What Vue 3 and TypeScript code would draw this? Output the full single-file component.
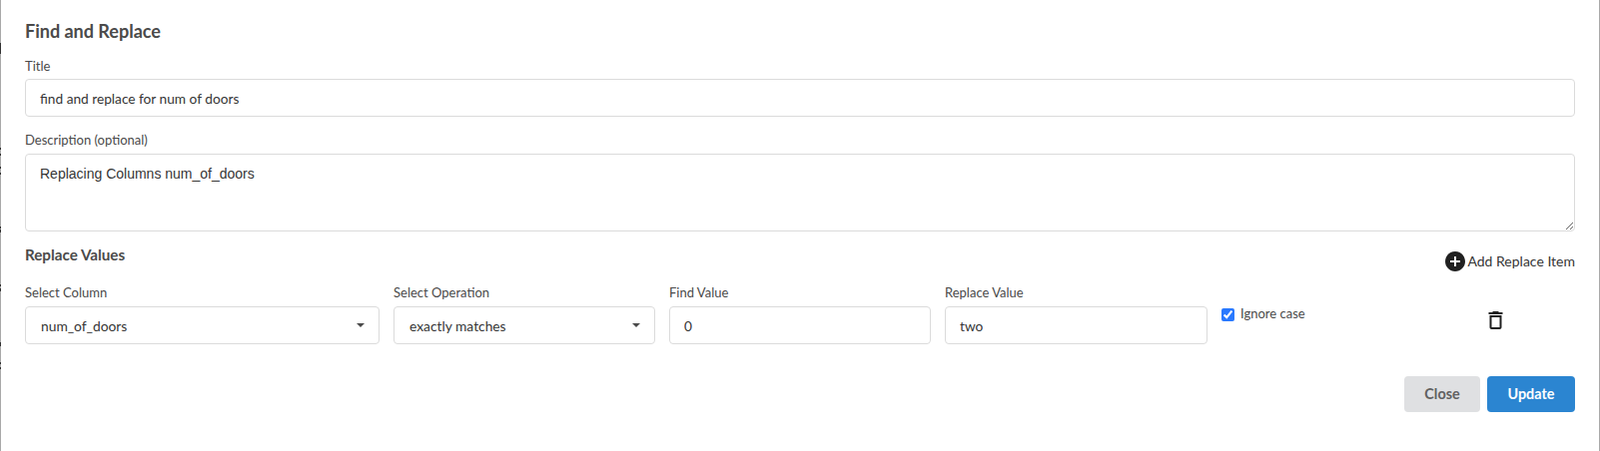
<script setup lang="ts">
interface Tick { top: number; height: number }
const ticks: Tick[] = [
  { top: 43, height: 11 },
  { top: 148, height: 2 },
  { top: 154, height: 2 },
  { top: 167, height: 2 },
  { top: 173, height: 2 },
  { top: 227, height: 2 },
  { top: 230, height: 3 },
  { top: 285, height: 2 },
  { top: 289, height: 3 },
  { top: 343, height: 4 },
  { top: 363, height: 2 },
  { top: 368, height: 2 },
]
</script>

<template>
  <div class="page">
    <div class="rail left">
      <span v-for="t in ticks" :key="t.top" class="tick" :style="{ top: t.top + 'px', height: t.height + 'px' }"></span>
    </div>
    <div class="rail right"></div>
    <div class="modal">
      <h2 class="title">Find and Replace</h2>
      <div class="field first">
        <label>Title</label>
        <input class="input" value="find and replace for num of doors" />
      </div>
      <div class="field second">
        <label>Description (optional)</label>
        <textarea class="input area">Replacing Columns num_of_doors</textarea>
      </div>
      <div class="head">
        <h3>Replace Values</h3>
        <button class="add" type="button">
          <svg width="20" height="20" viewBox="2 2 20 20">
            <path fill="#212121" d="M12 2C6.48 2 2 6.48 2 12s4.48 10 10 10 10-4.48 10-10S17.52 2 12 2zm5 11h-4v4h-2v-4H7v-2h4V7h2v4h4v2z" />
          </svg>
          <span>Add Replace Item</span>
        </button>
      </div>
      <div class="row">
        <div class="col c1">
          <label>Select Column</label>
          <div class="input select">num_of_doors<i class="caret"></i></div>
        </div>
        <div class="col c2">
          <label>Select Operation</label>
          <div class="input select">exactly matches<i class="caret"></i></div>
        </div>
        <div class="col c3">
          <label>Find Value</label>
          <input class="input" value="0" />
        </div>
        <div class="col c4">
          <label>Replace Value</label>
          <input class="input" value="two" />
        </div>
        <label class="check">
          <input type="checkbox" checked />
          <span>Ignore case</span>
        </label>
        <svg class="trash" width="15" height="18" viewBox="5 3 14 18">
          <path fill="#212121" d="M6 19c0 1.1.9 2 2 2h8c1.1 0 2-.9 2-2V7H6v12zM8 9h8v10H8V9zm7.5-5l-1-1h-5l-1 1H5v2h14V4h-3.5z" />
        </svg>
      </div>
      <div class="actions">
        <button class="btn close" type="button">Close</button>
        <button class="btn update" type="button">Update</button>
      </div>
    </div>
  </div>
</template>

<style>
html, body { margin: 0; background: #fff; }
</style>

<style scoped>
.page {
  position: relative;
  width: 1602px;
  height: 452px;
  overflow: hidden;
  background: #fff;
  box-sizing: border-box;
  font-family: Lato, sans-serif;
  color: #4a4a4a;
}
.rail { position: absolute; top: 0; bottom: 0; width: 1px; background: #a9a9a9; }
.rail.left { left: 0; }
.rail.right { right: 0; }
.tick { position: absolute; left: 0; width: 1px; background: #333; }
.modal { padding: 20px 25px 0 25px; }
.title { margin: 0; font-size: 18px; line-height: 22px; font-weight: 700; color: #4a4a4a; }
label { display: block; font-size: 13px; line-height: 16px; color: #4a4a4a; }
.field.first { margin-top: 16px; }
.field.second { margin-top: 15px; }
.field label { margin-bottom: 5px; }
.field.second label { margin-bottom: 6px; }
.input {
  display: block;
  width: 100%;
  height: 38px;
  box-sizing: border-box;
  border: 1px solid #dbdbdb;
  border-radius: 4px;
  padding: 1px 14px 0;
  font-family: Lato, sans-serif;
  font-size: 13.7px;
  color: #363636;
  background: #fff;
  outline: none;
}
.area {
  height: 78px;
  padding-top: 11px;
  font-family: "Liberation Sans", Arial, sans-serif;
  font-size: 14px;
  resize: vertical;
}
.head { display: flex; justify-content: space-between; margin-top: 15px; height: 38px; }
.head h3 { margin: 0; font-size: 15.2px; line-height: 16px; font-weight: 700; color: #4a4a4a; }
.add {
  display: flex;
  align-items: center;
  gap: 2px;
  height: 20px;
  margin-top: 5px;
  padding: 0;
  border: 0;
  background: none;
  font-family: Lato, sans-serif;
  font-size: 14px;
  color: #363636;
}
.add span { margin-bottom: 2px; }
.row { display: flex; align-items: flex-start; }
.col label { margin-bottom: 6px; }
.c1 { width: 355px; margin-right: 14px; }
.c2 { width: 262px; margin-right: 14px; }
.c3 { width: 262px; margin-right: 14px; }
.c4 { width: 263px; margin-right: 14px; }
.select { display: flex; align-items: center; position: relative; padding: 0 14px 0 15px; font-size: 13.8px; }
.caret {
  position: absolute;
  right: 14px;
  top: 16px;
  border: 4px solid transparent;
  border-top: 4px solid #4a4a4a;
  border-bottom: 0;
}
.check { display: flex; align-items: flex-start; gap: 6px; margin-top: 22px; font-size: 13px; line-height: 14px; color: #4a4a4a; width: 150px; }
.check input { margin: 2px 0 0; width: 13px; height: 13px; accent-color: #2979ff; }
.trash { margin: 27px 0 0 117px; }
.actions { display: flex; justify-content: flex-end; gap: 7px; margin-top: 32px; }
.btn {
  height: 36px;
  border: 0;
  border-radius: 4px;
  padding: 0 0 2px;
  font-family: Lato, sans-serif;
  font-size: 14.4px;
  font-weight: 700;
}
.close { width: 76px; background: #dfe0e2; color: #616161; }
.update { width: 88px; background: #2b85d1; color: #fff; }
</style>
